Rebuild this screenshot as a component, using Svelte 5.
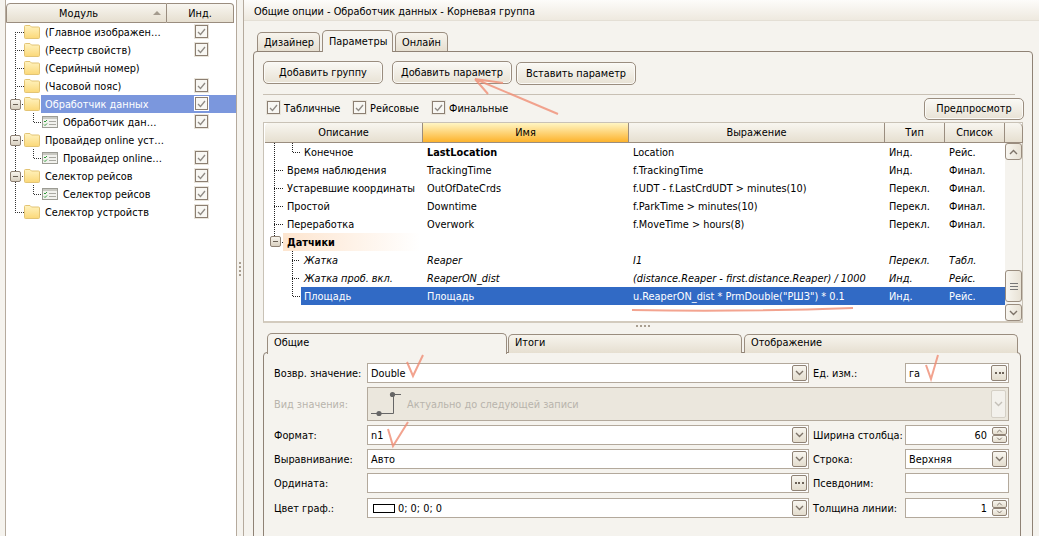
<script>
  const mods = [
    { t: '(Главное изображен…', i: 'f', c: true },
    { t: '(Реестр свойств)', i: 'f', c: true },
    { t: '(Серийный номер)', i: 'f', c: false },
    { t: '(Часовой пояс)', i: 'f', c: true },
    { t: 'Обработчик данных', i: 'f', c: true, exp: true, sel: true },
    { t: 'Обработчик дан…', i: 'm', c: true },
    { t: 'Провайдер online уст…', i: 'f', c: false, exp: true },
    { t: 'Провайдер online…', i: 'm', c: true },
    { t: 'Селектор рейсов', i: 'f', c: true, exp: true },
    { t: 'Селектор рейсов', i: 'm', c: true },
    { t: 'Селектор устройств', i: 'f', c: true }
  ];
  const rows = [
    { d: 'Конечное', n: 'LastLocation', e: 'Location', ty: 'Инд.', l: 'Рейс.', lv: 2, bold: true },
    { d: 'Время наблюдения', n: 'TrackingTime', e: 'f.TrackingTime', ty: 'Инд.', l: 'Финал.', lv: 1 },
    { d: 'Устаревшие координаты', n: 'OutOfDateCrds', e: 'f.UDT - f.LastCrdUDT > minutes(10)', ty: 'Перекл.', l: 'Финал.', lv: 1 },
    { d: 'Простой', n: 'Downtime', e: 'f.ParkTime > minutes(10)', ty: 'Перекл.', l: 'Финал.', lv: 1 },
    { d: 'Переработка', n: 'Overwork', e: 'f.MoveTime > hours(8)', ty: 'Перекл.', l: 'Финал.', lv: 1 },
    { d: 'Датчики', group: true, lv: 1 },
    { d: 'Жатка', n: 'Reaper', e: 'I1', ty: 'Перекл.', l: 'Табл.', lv: 2, it: true },
    { d: 'Жатка проб. вкл.', n: 'ReaperON_dist', e: '(distance.Reaper - first.distance.Reaper) / 1000', ty: 'Инд.', l: 'Рейс.', lv: 2, it: true },
    { d: 'Площадь', n: 'Площадь', e: 'u.ReaperON_dist * PrmDouble("РШЗ") * 0.1', ty: 'Инд.', l: 'Рейс.', lv: 2, sel: true }
  ];
  const cols = [
    { t: 'Описание' }, { t: 'Имя', on: true }, { t: 'Выражение' }, { t: 'Тип' }, { t: 'Список' }, { t: '' }
  ];
</script>

{#snippet chev(up = false, pale = false)}
  <svg class="glyph" width="9" height="6" viewBox="0 0 9 6" aria-hidden="true">
    <path d={up ? 'M1 5L4.5 1.5L8 5' : 'M1 1L4.5 4.5L8 1'} fill="none" stroke={pale ? '#c4c0b8' : '#7d7368'} stroke-width="1.4" />
  </svg>
{/snippet}

{#snippet drop()}
  <span class="mini">{@render chev()}</span>
{/snippet}

{#snippet dots()}
  <span class="mini wide"><i class="dots"></i></span>
{/snippet}

{#snippet spin()}
  <span class="spin">
    <span class="half">{@render chev(true)}</span>
    <span class="half">{@render chev()}</span>
  </span>
{/snippet}

{#snippet check(sel = false)}
  <span class="cb" class:seln={sel}>
    <svg width="9" height="8" viewBox="0 0 9 8" aria-hidden="true"><path d="M1 4L3.5 6.5L8 1" fill="none" stroke="#8f8a84" stroke-width="1.3" /></svg>
  </span>
{/snippet}

{#snippet folder()}
  <svg class="ic" width="16" height="14" viewBox="0 0 16 14" aria-hidden="true">
    <defs><linearGradient id="fg" x1="0" y1="0" x2="0" y2="1"><stop offset="0" stop-color="#fff3c0" /><stop offset="1" stop-color="#fbd878" /></linearGradient></defs>
    <path d="M.5 3V1.5Q.5.5 1.5.5H6L7.5 2H14.5Q15.5 2 15.5 3V12.5Q15.5 13.5 14.5 13.5H1.5Q.5 13.5.5 12.5Z" fill="url(#fg)" stroke="#e3c474" />
  </svg>
{/snippet}

{#snippet modIcon()}
  <svg class="ic" width="16" height="12" viewBox="0 0 16 12" aria-hidden="true">
    <rect x=".5" y=".5" width="15" height="11" fill="#f2f2ee" stroke="#9c9c94" />
    <rect x="1" y="1" width="14" height="2" fill="#c9c9c2" />
    <path d="M2 5L3 6L5 4M2 8.5L3 9.5L5 7.5" fill="none" stroke="#2f9a3a" />
    <path d="M7 5.5H14M7 8.5H14" stroke="#a9a9a2" />
  </svg>
{/snippet}

{#snippet plus(cls = '')}
  <span class="exp {cls}"><i></i></span>
{/snippet}

<div class="app">
  <aside class="left">
    <div class="mhead">
      <div class="mh1">Модуль<span class="sort"></span></div>
      <div class="mh2">Инд.</div>
    </div>
    <div class="tree">
      <svg class="guides" width="60" height="200" aria-hidden="true">
        <g stroke="#333" stroke-dasharray="1 1" fill="none">
          <path d="M15.5 9V189" />
          <path d="M15 9.5H24M15 27.5H24M15 45.5H24M15 63.5H24M22 81.5H24M22 117.5H24M22 153.5H24M15 189.5H24" />
          <path d="M33.5 90V99.5H42M33.5 126V135.5H42M33.5 162V171.5H42" />
        </g>
      </svg>
      {#each mods as m}
        <div class="mrow" class:msel={m.sel}>
          {#if m.exp}{@render plus('mexp')}{/if}
          <span class="mname" class:child={m.i === 'm'}>
            {#if m.i === 'f'}{@render folder()}{:else}{@render modIcon()}{/if}
            <span class="mt">{m.t}</span>
          </span>
          {#if m.c}<span class="mcheck">{@render check(m.sel)}</span>{/if}
        </div>
      {/each}
    </div>
  </aside>

  <div class="split"><i></i></div>

  <main class="right">
    <header class="title">Общие опции - Обработчик данных - Корневая группа</header>
    <div class="body">
      <nav class="tabs top">
        <span class="tab">Дизайнер</span>
        <span class="tab on">Параметры</span>
        <span class="tab">Онлайн</span>
      </nav>
      <section class="outer">
        <div class="tools">
          <button>Добавить группу</button>
          <button class="b2">Добавить параметр</button>
          <button class="b3">Вставить параметр</button>
        </div>
        <div class="sep"></div>
        <div class="filters">
          <label class="f1">{@render check()}<span class="lt">Табличные</span></label>
          <label class="f2">{@render check()}<span class="lt">Рейсовые</span></label>
          <label class="f3">{@render check()}<span class="lt">Финальные</span></label>
          <button class="preview">Предпросмотр</button>
        </div>

        <div class="grid">
          <div class="ghead">
            {#each cols as c}
              <div class="gh" class:active={c.on}>{c.t}</div>
            {/each}
          </div>
          <div class="gbody">
            <div class="rows">
              <svg class="guides" width="50" height="170" aria-hidden="true">
                <g stroke="#222" stroke-dasharray="1 1" fill="none">
                  <path d="M9.5 0V99" />
                  <path d="M27.5 0V9.5H35" />
                  <path d="M9 27.5H19M9 45.5H19M9 63.5H19M9 81.5H19M15 99.5H18" />
                  <path d="M27.5 108V153.5H36M27 117.5H35M27 135.5H35" />
                </g>
              </svg>
              {#each rows as r}
                <div class="row" class:sel={r.sel} class:it={r.it} class:group={r.group}>
                  {#if r.group}{@render plus('gexp')}{/if}
                  <span class="c desc" class:lv2={r.lv === 2}>{r.d}</span>
                  {#if !r.group}
                    <span class="c" class:b={r.bold}>{r.n}</span>
                    <span class="c">{r.e}</span>
                    <span class="c">{r.ty}</span>
                    <span class="c">{r.l}</span>
                  {/if}
                </div>
              {/each}
            </div>
            <div class="sb">
              <span class="sbtn">{@render chev(true)}</span>
              <span class="thumb"><i></i></span>
              <span class="sbtn">{@render chev()}</span>
            </div>
          </div>
        </div>

        <div class="hsplit"><i></i></div>

        <nav class="tabs low">
          <span class="tab on t1">Общие</span>
          <span class="tab t2">Итоги</span>
          <span class="tab t3">Отображение</span>
        </nav>
        <section class="inner">
          <div class="form">
            <span class="lab">Возвр. значение:</span>
            <div class="fld"><span class="v">Double</span>{@render drop()}</div>
            <span class="lab l2">Ед. изм.:</span>
            <div class="fld"><span class="v">га</span>{@render dots()}</div>

            <span class="lab dim">Вид значения:</span>
            <div class="fld disabled span3">
              <svg width="36" height="32" viewBox="0 0 36 32" aria-hidden="true">
                <path d="M3 25.5H25.5V6.5H33" fill="none" stroke="#666" />
                <circle cx="11" cy="25.5" r="2.6" fill="#666" />
                <circle cx="24.5" cy="6.5" r="2.6" fill="#666" />
              </svg>
              <span class="dimtext v">Актуально до следующей записи</span>
              <span class="mini pale">{@render chev(false, true)}</span>
            </div>

            <span class="lab">Формат:</span>
            <div class="fld"><span class="v">n1</span>{@render drop()}</div>
            <span class="lab l2">Ширина столбца:</span>
            <div class="fld num"><span class="val v">60</span>{@render spin()}</div>

            <span class="lab">Выравнивание:</span>
            <div class="fld"><span class="v">Авто</span>{@render drop()}</div>
            <span class="lab l2">Строка:</span>
            <div class="fld"><span class="v">Верхняя</span>{@render drop()}</div>

            <span class="lab">Ордината:</span>
            <div class="fld">{@render dots()}</div>
            <span class="lab l2">Псевдоним:</span>
            <div class="fld"></div>

            <span class="lab">Цвет граф.:</span>
            <div class="fld"><i class="swatch"></i><span class="v">0; 0; 0; 0</span>{@render drop()}</div>
            <span class="lab l2">Толщина линии:</span>
            <div class="fld num"><span class="val v">1</span>{@render spin()}</div>
          </div>
        </section>
      </section>
    </div>
  </main>

  <svg class="marks" width="1039" height="536" aria-hidden="true">
    <g fill="none" stroke="#f08d74" stroke-width="2" opacity=".8">
      <path d="M558 114L475 79M475 79L503 83M475 79L488 94" />
      <path d="M632 310Q740 312 853 308" />
      <path d="M407 362L413 376L423 355" />
      <path d="M388 429L393 446L408 422" />
      <path d="M926 365L931 379L938 355" />
    </g>
  </svg>
</div>

<style>
  :global(body) { margin: 0; }
  * { box-sizing: border-box; }
  .app {
    position: relative;
    display: flex;
    width: 1039px;
    height: 536px;
    overflow: hidden;
    background: #f5f3ee;
    color: #000;
    font: 9.75px/18px "DejaVu Sans", "Liberation Sans", sans-serif;
  }
  i { display: block; }

  /* left module tree */
  .left {
    flex: 0 0 232px;
    margin-left: 5px;
    background: #fff;
    border-left: 1px solid #b5aa9d;
    border-right: 1px solid #b5aa9d;
    padding-top: 3px;
  }
  .mhead { display: flex; width: 228px; height: 20px; }
  .mh1, .mh2 {
    height: 20px;
    border: 1px solid #9a8d7f;
    border-radius: 4px 0 0 0;
    background: linear-gradient(#f8f6f0, #e6dfd0);
    text-align: center;
    line-height: 20px;
  }
  .mh1 { position: relative; flex: 0 0 161px; padding-right: 16px; }
  .mh2 { flex: 1; border-left: 0; border-radius: 0 4px 0 0; }
  .sort {
    position: absolute; right: 5px; top: 7px;
    width: 0; height: 0;
    border: 4px solid transparent; border-top: 0; border-bottom: 4px solid #a49b8e;
  }
  .tree { position: relative; }
  .guides { position: absolute; left: 0; top: 0; overflow: visible; pointer-events: none; }
  .tree .guides { left: -6px; }
  .mrow { position: relative; display: flex; align-items: center; height: 18px; }
  .msel { background: linear-gradient(90deg, transparent 35px, #7b97dd 35px); color: #fff; }
  .mname { display: flex; align-items: center; padding-left: 18px; flex: 1; }
  .mname.child { padding-left: 36px; }
  .mt { margin-left: 5px; white-space: nowrap; padding-top: 2px; }
  .ic { flex: none; }
  .mcheck { position: absolute; left: 189px; top: 2px; line-height: 0; }

  .exp {
    position: absolute;
    width: 11px; height: 11px;
    border: 1px solid #8d8073;
    border-radius: 2px;
    background: linear-gradient(#f8f5ee, #d9d0c0);
  }
  .exp i { width: 5px; height: 1px; margin: 4px 2px; background: #6b6156; }
  .mexp { left: 4px; top: 4px; }
  .gexp { left: 5px; top: 3px; }

  .cb {
    display: inline-flex; align-items: center; justify-content: center;
    width: 13px; height: 13px;
    border: 1px solid #8c7f72;
    background: #f8f7f3;
    box-shadow: 0 0 0 1px #e9e5dc;
    flex: none;
  }
  .cb.seln { box-shadow: 0 0 0 1px #fff; }

  .split { flex: 0 0 6px; display: flex; align-items: center; justify-content: center; }
  .split i { width: 2px; height: 14px; margin-top: 1px; background: repeating-linear-gradient(#a89e90 0 2px, transparent 2px 4px); }

  /* right side */
  .right { flex: 1; display: flex; flex-direction: column; min-width: 0; border-left: 1px solid #b5aa9d; }
  .title {
    height: 21px;
    padding: 3px 0 0 10px;
    background: linear-gradient(#fdfcfa, #eee9df);
    border-bottom: 1px solid #e4dfd5;
    line-height: 18px;
  }
  .body { flex: 1; padding: 10px 6px 0 9px; display: flex; flex-direction: column; }

  .tabs { display: flex; align-items: flex-end; position: relative; z-index: 1; }
  .tab {
    display: block;
    height: 19px;
    margin-right: 2px;
    padding: 0 6px;
    border: 1px solid #9a8d7f;
    border-bottom: 0;
    border-radius: 5px 5px 0 0;
    background: linear-gradient(#f7f4ed, #e6dfd1);
    line-height: 19px;
    white-space: nowrap;
  }
  .tab.on { height: 22px; background: #f5f3ee; margin-bottom: -1px; padding-top: 1px; }
  .top { padding-left: 4px; height: 20px; }
  .top .tab:first-child { width: 63px; }
  .top .tab:nth-child(2) { width: 71px; }
  .top .tab:nth-child(3) { width: 53px; }

  .outer {
    flex: 1;
    display: flex;
    flex-direction: column;
    border: 1px solid #8f8275;
    border-radius: 4px 4px 0 0;
    padding: 9px 9px 0 9px;
    margin-bottom: -12px;
  }
  button {
    height: 23px;
    width: 120px;
    padding: 0;
    border: 1px solid #9a8d7f;
    border-radius: 5px;
    background: linear-gradient(#faf9f5, #e8e2d5);
    color: #000;
    font: inherit;
    box-shadow: inset 0 0 0 1px #fbfaf7;
  }
  .tools { display: flex; align-items: flex-start; height: 24px; }
  .b2 { margin-left: 9px; }
  .b3 { margin-left: 4px; margin-top: 1px; }
  .sep { height: 1px; margin: 9px 8px 0 0; background: #c8c0b4; }
  .filters { display: flex; align-items: center; height: 24px; margin: 2px 0 0; }
  .filters label { display: flex; align-items: center; gap: 4px; margin-top: -3px; }
  .lt { padding-top: 2px; }
  .f1 { margin-left: 4px; width: 86px; }
  .f2 { width: 79px; }
  .f3 { width: 0; flex: 1; }
  .preview { width: 100px; height: 22px; margin-right: -1px; }

  .grid {
    height: 201px;
    width: 760px;
    margin-top: 1px;
    border: 1px solid #c9c2b6;
    border-bottom: 2px solid #d3cbbe;
    background: #fff;
    display: flex;
    flex-direction: column;
    padding-left: 1px;
  }
  .ghead { display: grid; grid-template-columns: 158px 206px 256px 60px 60px 18px; height: 20px; flex: none; }
  .gh {
    border-right: 1px solid #9a8d7f;
    border-bottom: 1px solid #9a8d7f;
    background: linear-gradient(#f8f6f0, #e6dfd0);
    text-align: center;
    line-height: 19px;
  }
  .gh:first-child { border-radius: 4px 0 0 0; }
  .gh:last-child { border-radius: 0 5px 0 0; }
  .gh.active { background: linear-gradient(#fff6c4, #fdb32c); }
  .gbody { flex: 1; display: flex; min-height: 0; }
  .rows { position: relative; flex: 0 0 740px; }
  .row {
    position: relative;
    display: grid;
    grid-template-columns: 158px 206px 256px 60px 60px;
    height: 18px;
    line-height: 20px;
  }
  .row .c { padding-left: 4px; white-space: nowrap; overflow: visible; }
  .row .desc { padding-left: 22px; }
  .row .desc.lv2 { padding-left: 39px; }
  .row.it { font-style: italic; }
  .row.sel { background: linear-gradient(90deg, transparent 36px, #316ac5 36px); color: #fff; }
  .row.group { background: linear-gradient(90deg, transparent 18px, #fde5cf 18px, #fff 155px); font-weight: 700; }
  .b { font-weight: 700; }

  .sb { flex: none; width: 17px; display: flex; flex-direction: column; background: #f5f3ee; }
  .sbtn, .thumb {
    display: flex; align-items: center; justify-content: center;
    border: 1px solid #9a8d7f;
    border-radius: 3px;
    background: linear-gradient(90deg, #f8f6f0, #e8e2d5);
    flex: none;
  }
  .sbtn { height: 17px; }
  .sb .sbtn:last-child { margin-top: 2px; }
  .thumb { height: 32px; margin-top: auto; }
  .thumb i { width: 8px; height: 7px; border-top: 1px solid #777; border-bottom: 1px solid #777; background: linear-gradient(#777,#777) center/100% 1px no-repeat; }

  .hsplit { height: 8px; width: 760px; flex: none; display: flex; justify-content: center; }
  .hsplit i { width: 14px; height: 2px; margin-top: 2px; background: repeating-linear-gradient(90deg, #a89e90 0 2px, transparent 2px 4px); }

  .low { padding-left: 4px; height: 21px; margin-top: 1px; }
  .low .tab { height: 19px; line-height: 16px; }
  .low .tab.on { height: 21px; line-height: 18px; padding-top: 0; }
  .low .t1 { width: 240px; margin-right: 1px; background: #f5f3ee; }
  .low .t2 { width: 234px; margin-right: 2px; }
  .low .t3 { width: 274px; margin-right: 0; }

  .inner {
    flex: 1;
    width: 758px;
    border: 1px solid #8f8275;
    border-radius: 4px 4px 0 0;
    padding: 10px 0 0 10px;
    margin-top: -1px;
  }
  .form {
    display: grid;
    grid-template-columns: 93px 442px 96px 104px;
    grid-template-rows: 20px 34px 20px 20px 20px 21px;
    row-gap: 4px;
    align-items: center;
  }
  .lab { white-space: nowrap; padding-top: 2px; }
  .l2 { padding-left: 4px; }
  .dim { color: #b8b4ac; }
  .fld {
    position: relative;
    display: flex;
    align-items: center;
    align-self: end;
    height: 20px;
    padding-left: 3px;
    border: 1px solid #b3a99c;
    background: #fff;
    white-space: nowrap;
  }
  .v { padding-top: 2px; }
  .span3 { grid-column: span 3; }
  .disabled { height: 34px; background: #ebe7dd; padding-left: 0; color: #b8b4ac; }
  .dimtext { margin-left: 3px; }
  .swatch { width: 22px; height: 9px; border: 1px solid #000; margin: 0 3px 0 2px; background: #fff; }
  .mini {
    position: absolute; right: 1px; top: 1px;
    display: flex; align-items: center; justify-content: center;
    width: 15px; height: 16px;
    border: 1px solid #8f8275;
    border-radius: 2px;
    background: linear-gradient(#f8f6f0, #e4ddce);
  }
  .mini.wide { width: 16px; }
  .mini.pale { top: 2px; height: 28px; border-color: #d5d0c6; background: #f3f1ec; right: 2px; }
  .dots { width: 9px; height: 2px; background: repeating-linear-gradient(90deg, #6d6358 0 2px, transparent 2px 3.5px); }
  .num .val { margin-left: auto; margin-right: 21px; }
  .spin { position: absolute; right: 1px; top: 1px; display: flex; flex-direction: column; width: 15px; }
  .half {
    display: flex; align-items: center; justify-content: center;
    height: 8px;
    border: 1px solid #8f8275;
    border-radius: 2px;
    background: linear-gradient(#f8f6f0, #e4ddce);
  }
  .half .glyph { width: 7px; height: 4px; }
  .marks { position: absolute; left: 0; top: 0; pointer-events: none; }
</style>
